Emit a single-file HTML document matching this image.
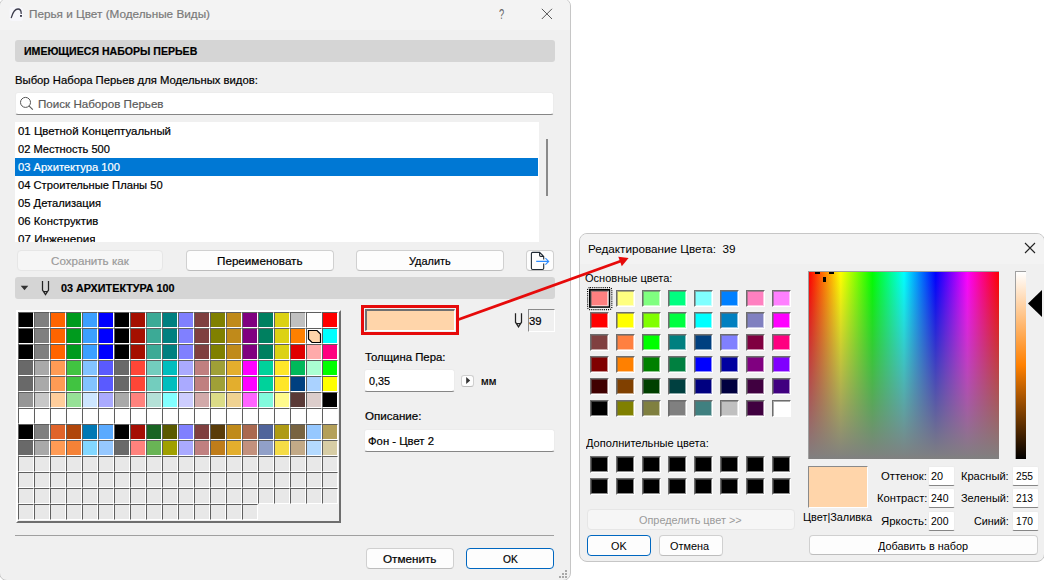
<!DOCTYPE html><html lang="ru"><head><meta charset="utf-8"><title>Перья и Цвет</title><style>
html,body{margin:0;padding:0;background:#fff;}
body{width:1044px;height:580px;position:relative;overflow:hidden;font-family:"Liberation Sans",sans-serif;}
.a{position:absolute;box-sizing:border-box;}
.t{position:absolute;white-space:pre;line-height:16px;height:16px;transform-origin:0 0;-webkit-text-stroke:0.2px;}
.dlg{position:absolute;box-sizing:border-box;background:#f0f0f0;border:1px solid #c6c6c6;overflow:hidden;}
.hdr{position:absolute;box-sizing:border-box;background:#d5d5d5;border-radius:3px;}
.btn{position:absolute;box-sizing:border-box;background:#fdfdfd;border:1px solid #d0d0d0;border-bottom-color:#bdbdbd;border-radius:4px;}
.btn.dis{background:#f6f6f6;border-color:#e6e6e6;}
.btn.def{border:1.5px solid #0067c0;}
.inp{position:absolute;box-sizing:border-box;background:#fff;border:1px solid #ececec;border-bottom:1px solid #868686;border-radius:3px;}
.grid{position:absolute;left:16px;top:310px;width:325px;height:213px;box-sizing:border-box;background:#f0f0f0;border-left:2px solid #fff;border-top:2px solid #fff;border-right:2px solid #6e6e6e;border-bottom:2px solid #6e6e6e;}
.grid i{position:absolute;margin:-2px 0 0 -2px;width:16px;height:16px;box-sizing:border-box;border-left:1px solid #5f5f5f;border-top:1px solid #5f5f5f;border-right:1px solid #fff;border-bottom:1px solid #fff;}
.sw{position:absolute;width:19px;height:17px;box-sizing:border-box;border-left:1px solid #6e6e6e;border-top:1px solid #6e6e6e;border-right:1px solid #fff;border-bottom:1px solid #fff;box-shadow:inset 1px 1px 0 rgba(105,105,105,.55),inset -1px -1px 0 rgba(255,255,255,.55);}
</style></head><body>
<div class="dlg" style="left:-1px;top:-2px;width:572px;height:583px;border-radius:8px;"><div class="a" style="left:0;top:0;width:572px;height:31px;background:#f3f3f3"></div></div>
<div class="hdr" style="left:15px;top:40px;width:540px;height:22px"></div>
<div class="inp" style="left:15px;top:92px;width:539px;height:23px"></div>
<div class="a" style="left:15px;top:122px;width:524px;height:120px;background:#fff"></div>
<div class="a" style="left:15px;top:158px;width:523px;height:18px;background:#0078d4"></div>
<div class="a" style="left:546px;top:139px;width:2px;height:57px;background:#8a8a8a"></div>
<div class="btn dis" style="left:17px;top:250px;width:146px;height:21px"></div>
<div class="btn" style="left:186px;top:250px;width:148px;height:21px"></div>
<div class="btn" style="left:356px;top:250px;width:148px;height:21px"></div>
<div class="btn" style="left:526px;top:250px;width:28px;height:21px"></div>
<div class="hdr" style="left:15px;top:277px;width:540px;height:22px"></div>
<div class="grid"><i style="left:2px;top:2px;background:#000000"></i><i style="left:18px;top:2px;background:#808080"></i><i style="left:34px;top:2px;background:#FF6400"></i><i style="left:50px;top:2px;background:#009B1E"></i><i style="left:66px;top:2px;background:#3CA0FF"></i><i style="left:82px;top:2px;background:#0000FF"></i><i style="left:98px;top:2px;background:#000000"></i><i style="left:114px;top:2px;background:#A50F00"></i><i style="left:130px;top:2px;background:#3CAA96"></i><i style="left:146px;top:2px;background:#008080"></i><i style="left:162px;top:2px;background:#8080FF"></i><i style="left:178px;top:2px;background:#804040"></i><i style="left:194px;top:2px;background:#808000"></i><i style="left:210px;top:2px;background:#C08A1A"></i><i style="left:226px;top:2px;background:#800080"></i><i style="left:242px;top:2px;background:#008060"></i><i style="left:258px;top:2px;background:#DCD214"></i><i style="left:274px;top:2px;background:#C0C0C0"></i><i style="left:290px;top:2px;background:#FFFFFF"></i><i style="left:306px;top:2px;background:#FF0000"></i><i style="left:2px;top:18px;background:#000000"></i><i style="left:18px;top:18px;background:#808080"></i><i style="left:34px;top:18px;background:#FF6400"></i><i style="left:50px;top:18px;background:#009B1E"></i><i style="left:66px;top:18px;background:#3CA0FF"></i><i style="left:82px;top:18px;background:#0000FF"></i><i style="left:98px;top:18px;background:#000000"></i><i style="left:114px;top:18px;background:#A50F00"></i><i style="left:130px;top:18px;background:#3CAA96"></i><i style="left:146px;top:18px;background:#008080"></i><i style="left:162px;top:18px;background:#8080FF"></i><i style="left:178px;top:18px;background:#804040"></i><i style="left:194px;top:18px;background:#808000"></i><i style="left:210px;top:18px;background:#C08A1A"></i><i style="left:226px;top:18px;background:#800080"></i><i style="left:242px;top:18px;background:#008060"></i><i style="left:258px;top:18px;background:#DCD214"></i><i style="left:274px;top:18px;background:#FF8000"></i><i style="left:290px;top:18px;background:#fff"></i><svg style="position:absolute;left:288px;top:16px" width="16" height="16"><polygon points="2.5,2.5 11,2.5 14.5,6 14.5,14.5 6,14.5 2.5,11" fill="#FFD5AA" stroke="#000" stroke-width="1.2"/></svg><i style="left:306px;top:18px;background:#00FFFF"></i><i style="left:2px;top:34px;background:#000000"></i><i style="left:18px;top:34px;background:#808080"></i><i style="left:34px;top:34px;background:#FF6400"></i><i style="left:50px;top:34px;background:#009B1E"></i><i style="left:66px;top:34px;background:#3CA0FF"></i><i style="left:82px;top:34px;background:#0000FF"></i><i style="left:98px;top:34px;background:#000000"></i><i style="left:114px;top:34px;background:#A50F00"></i><i style="left:130px;top:34px;background:#3CAA96"></i><i style="left:146px;top:34px;background:#008080"></i><i style="left:162px;top:34px;background:#8080FF"></i><i style="left:178px;top:34px;background:#804040"></i><i style="left:194px;top:34px;background:#808000"></i><i style="left:210px;top:34px;background:#C08A1A"></i><i style="left:226px;top:34px;background:#800080"></i><i style="left:242px;top:34px;background:#008060"></i><i style="left:258px;top:34px;background:#DCD214"></i><i style="left:274px;top:34px;background:#E00000"></i><i style="left:290px;top:34px;background:#FFAAAA"></i><i style="left:306px;top:34px;background:#FF0080"></i><i style="left:2px;top:50px;background:#696969"></i><i style="left:18px;top:50px;background:#A9A9A9"></i><i style="left:34px;top:50px;background:#FF9B55"></i><i style="left:50px;top:50px;background:#41C341"></i><i style="left:66px;top:50px;background:#82C3FF"></i><i style="left:82px;top:50px;background:#5A5AFF"></i><i style="left:98px;top:50px;background:#696969"></i><i style="left:114px;top:50px;background:#FF4637"></i><i style="left:130px;top:50px;background:#73CDBE"></i><i style="left:146px;top:50px;background:#00BEBE"></i><i style="left:162px;top:50px;background:#AAAAFF"></i><i style="left:178px;top:50px;background:#C08080"></i><i style="left:194px;top:50px;background:#A0A037"></i><i style="left:210px;top:50px;background:#E3AE2D"></i><i style="left:226px;top:50px;background:#FF00FF"></i><i style="left:242px;top:50px;background:#00D29B"></i><i style="left:258px;top:50px;background:#FFE628"></i><i style="left:274px;top:50px;background:#00B95A"></i><i style="left:290px;top:50px;background:#AAFFD2"></i><i style="left:306px;top:50px;background:#00FF00"></i><i style="left:2px;top:66px;background:#696969"></i><i style="left:18px;top:66px;background:#A9A9A9"></i><i style="left:34px;top:66px;background:#FF9B55"></i><i style="left:50px;top:66px;background:#41C341"></i><i style="left:66px;top:66px;background:#82C3FF"></i><i style="left:82px;top:66px;background:#5A5AFF"></i><i style="left:98px;top:66px;background:#696969"></i><i style="left:114px;top:66px;background:#FF4637"></i><i style="left:130px;top:66px;background:#73CDBE"></i><i style="left:146px;top:66px;background:#00BEBE"></i><i style="left:162px;top:66px;background:#AAAAFF"></i><i style="left:178px;top:66px;background:#C08080"></i><i style="left:194px;top:66px;background:#A0A037"></i><i style="left:210px;top:66px;background:#E3AE2D"></i><i style="left:226px;top:66px;background:#FF00FF"></i><i style="left:242px;top:66px;background:#00D29B"></i><i style="left:258px;top:66px;background:#FFE628"></i><i style="left:274px;top:66px;background:#004080"></i><i style="left:290px;top:66px;background:#AAD2FF"></i><i style="left:306px;top:66px;background:#FFFF00"></i><i style="left:2px;top:82px;background:#969696"></i><i style="left:18px;top:82px;background:#C8C8C8"></i><i style="left:34px;top:82px;background:#FFCD9B"></i><i style="left:50px;top:82px;background:#96E196"></i><i style="left:66px;top:82px;background:#CDE6FF"></i><i style="left:82px;top:82px;background:#AAAAFF"></i><i style="left:98px;top:82px;background:#AAAAAA"></i><i style="left:114px;top:82px;background:#FF827D"></i><i style="left:130px;top:82px;background:#B4E1D7"></i><i style="left:146px;top:82px;background:#82FFFF"></i><i style="left:162px;top:82px;background:#CDCDFF"></i><i style="left:178px;top:82px;background:#D2AAAA"></i><i style="left:194px;top:82px;background:#DCDC87"></i><i style="left:210px;top:82px;background:#F0D291"></i><i style="left:226px;top:82px;background:#FF64FF"></i><i style="left:242px;top:82px;background:#82FADC"></i><i style="left:258px;top:82px;background:#FFFA8C"></i><i style="left:274px;top:82px;background:#5A3A37"></i><i style="left:290px;top:82px;background:#DCCDCB"></i><i style="left:306px;top:82px;background:#000000"></i><i style="left:2px;top:98px;background:#FFFFFF"></i><i style="left:18px;top:98px;background:#FFFFFF"></i><i style="left:34px;top:98px;background:#FFFFFF"></i><i style="left:50px;top:98px;background:#FFFFFF"></i><i style="left:66px;top:98px;background:#FFFFFF"></i><i style="left:82px;top:98px;background:#FFFFFF"></i><i style="left:98px;top:98px;background:#FFFFFF"></i><i style="left:114px;top:98px;background:#FFFFFF"></i><i style="left:130px;top:98px;background:#FFFFFF"></i><i style="left:146px;top:98px;background:#FFFFFF"></i><i style="left:162px;top:98px;background:#FFFFFF"></i><i style="left:178px;top:98px;background:#FFFFFF"></i><i style="left:194px;top:98px;background:#FFFFFF"></i><i style="left:210px;top:98px;background:#FFFFFF"></i><i style="left:226px;top:98px;background:#FFFFFF"></i><i style="left:242px;top:98px;background:#FFFFFF"></i><i style="left:258px;top:98px;background:#FFFFFF"></i><i style="left:274px;top:98px;background:#FFFFFF"></i><i style="left:290px;top:98px;background:#FFFFFF"></i><i style="left:306px;top:98px;background:#FFFFFF"></i><i style="left:2px;top:114px;background:#000000"></i><i style="left:18px;top:114px;background:#808080"></i><i style="left:34px;top:114px;background:#E0642A"></i><i style="left:50px;top:114px;background:#B0460A"></i><i style="left:66px;top:114px;background:#0078B4"></i><i style="left:82px;top:114px;background:#5AAAFF"></i><i style="left:98px;top:114px;background:#000000"></i><i style="left:114px;top:114px;background:#A50F05"></i><i style="left:130px;top:114px;background:#196423"></i><i style="left:146px;top:114px;background:#5A5A00"></i><i style="left:162px;top:114px;background:#8080FF"></i><i style="left:178px;top:114px;background:#804040"></i><i style="left:194px;top:114px;background:#5A3C0A"></i><i style="left:210px;top:114px;background:#C08A1A"></i><i style="left:226px;top:114px;background:#AA6950"></i><i style="left:242px;top:114px;background:#50649B"></i><i style="left:258px;top:114px;background:#AF9B14"></i><i style="left:274px;top:114px;background:#786441"></i><i style="left:290px;top:114px;background:#96C8FF"></i><i style="left:306px;top:114px;background:#B4A05A"></i><i style="left:2px;top:130px;background:#696969"></i><i style="left:18px;top:130px;background:#A9A9A9"></i><i style="left:34px;top:130px;background:#FF9B55"></i><i style="left:50px;top:130px;background:#F58237"></i><i style="left:66px;top:130px;background:#82D7FF"></i><i style="left:82px;top:130px;background:#96C8FF"></i><i style="left:98px;top:130px;background:#696969"></i><i style="left:114px;top:130px;background:#FF827D"></i><i style="left:130px;top:130px;background:#69B455"></i><i style="left:146px;top:130px;background:#A0A000"></i><i style="left:162px;top:130px;background:#AAAAFF"></i><i style="left:178px;top:130px;background:#C08080"></i><i style="left:194px;top:130px;background:#C07D1A"></i><i style="left:210px;top:130px;background:#E3AE2D"></i><i style="left:226px;top:130px;background:#C3917D"></i><i style="left:242px;top:130px;background:#91A0C8"></i><i style="left:258px;top:130px;background:#F5DC46"></i><i style="left:274px;top:130px;background:#C3AA87"></i><i style="left:290px;top:130px;background:#B4DAFF"></i><i style="left:306px;top:130px;background:#D7CDA5"></i><i style="left:2px;top:146px;background:#E8E8E8"></i><i style="left:18px;top:146px;background:#E8E8E8"></i><i style="left:34px;top:146px;background:#E8E8E8"></i><i style="left:50px;top:146px;background:#E8E8E8"></i><i style="left:66px;top:146px;background:#E8E8E8"></i><i style="left:82px;top:146px;background:#E8E8E8"></i><i style="left:98px;top:146px;background:#E8E8E8"></i><i style="left:114px;top:146px;background:#E8E8E8"></i><i style="left:130px;top:146px;background:#E8E8E8"></i><i style="left:146px;top:146px;background:#E8E8E8"></i><i style="left:162px;top:146px;background:#E8E8E8"></i><i style="left:178px;top:146px;background:#E8E8E8"></i><i style="left:194px;top:146px;background:#E8E8E8"></i><i style="left:210px;top:146px;background:#E8E8E8"></i><i style="left:226px;top:146px;background:#E8E8E8"></i><i style="left:242px;top:146px;background:#E8E8E8"></i><i style="left:258px;top:146px;background:#E8E8E8"></i><i style="left:274px;top:146px;background:#E8E8E8"></i><i style="left:290px;top:146px;background:#E8E8E8"></i><i style="left:306px;top:146px;background:#E8E8E8"></i><i style="left:2px;top:162px;background:#E8E8E8"></i><i style="left:18px;top:162px;background:#E8E8E8"></i><i style="left:34px;top:162px;background:#E8E8E8"></i><i style="left:50px;top:162px;background:#E8E8E8"></i><i style="left:66px;top:162px;background:#E8E8E8"></i><i style="left:82px;top:162px;background:#E8E8E8"></i><i style="left:98px;top:162px;background:#E8E8E8"></i><i style="left:114px;top:162px;background:#E8E8E8"></i><i style="left:130px;top:162px;background:#E8E8E8"></i><i style="left:146px;top:162px;background:#E8E8E8"></i><i style="left:162px;top:162px;background:#E8E8E8"></i><i style="left:178px;top:162px;background:#E8E8E8"></i><i style="left:194px;top:162px;background:#E8E8E8"></i><i style="left:210px;top:162px;background:#E8E8E8"></i><i style="left:226px;top:162px;background:#E8E8E8"></i><i style="left:242px;top:162px;background:#E8E8E8"></i><i style="left:258px;top:162px;background:#E8E8E8"></i><i style="left:274px;top:162px;background:#E8E8E8"></i><i style="left:290px;top:162px;background:#E8E8E8"></i><i style="left:306px;top:162px;background:#E8E8E8"></i><i style="left:2px;top:178px;background:#E8E8E8"></i><i style="left:18px;top:178px;background:#E8E8E8"></i><i style="left:34px;top:178px;background:#E8E8E8"></i><i style="left:50px;top:178px;background:#E8E8E8"></i><i style="left:66px;top:178px;background:#E8E8E8"></i><i style="left:82px;top:178px;background:#E8E8E8"></i><i style="left:98px;top:178px;background:#E8E8E8"></i><i style="left:114px;top:178px;background:#E8E8E8"></i><i style="left:130px;top:178px;background:#E8E8E8"></i><i style="left:146px;top:178px;background:#E8E8E8"></i><i style="left:162px;top:178px;background:#E8E8E8"></i><i style="left:178px;top:178px;background:#E8E8E8"></i><i style="left:194px;top:178px;background:#E8E8E8"></i><i style="left:210px;top:178px;background:#E8E8E8"></i><i style="left:226px;top:178px;background:#E8E8E8"></i><i style="left:242px;top:178px;background:#E8E8E8"></i><i style="left:258px;top:178px;background:#E8E8E8"></i><i style="left:274px;top:178px;background:#E8E8E8"></i><i style="left:290px;top:178px;background:#E8E8E8"></i><i style="left:306px;top:178px;background:#E8E8E8"></i><i style="left:2px;top:194px;background:#E8E8E8"></i><i style="left:18px;top:194px;background:#E8E8E8"></i><i style="left:34px;top:194px;background:#E8E8E8"></i><i style="left:50px;top:194px;background:#E8E8E8"></i><i style="left:66px;top:194px;background:#E8E8E8"></i><i style="left:82px;top:194px;background:#E8E8E8"></i><i style="left:98px;top:194px;background:#E8E8E8"></i><i style="left:114px;top:194px;background:#E8E8E8"></i><i style="left:130px;top:194px;background:#E8E8E8"></i><i style="left:146px;top:194px;background:#E8E8E8"></i><i style="left:162px;top:194px;background:#E8E8E8"></i><i style="left:178px;top:194px;background:#E8E8E8"></i><i style="left:194px;top:194px;background:#E8E8E8"></i><i style="left:210px;top:194px;background:#E8E8E8"></i><i style="left:226px;top:194px;background:#E8E8E8"></i></div>
<div class="a" style="left:361px;top:305px;width:98px;height:30px;border:3px solid #e60a0a;"></div>
<div class="a" style="left:365px;top:309px;width:90px;height:22px;background:#ffd5aa;border-left:2px solid #707070;border-top:2px solid #707070;border-right:1px solid #fff;border-bottom:1px solid #fff"></div>
<div class="a" style="left:528px;top:309px;width:27px;height:23px;background:#f0f0f0;border-left:1px solid #8a8a8a;border-top:1px solid #8a8a8a;border-right:1px solid #fff;border-bottom:1px solid #fff"></div>
<div class="inp" style="left:364px;top:369px;width:91px;height:23px"></div>
<div class="btn" style="left:461px;top:375px;width:13px;height:12px;border-radius:3px"></div>
<div class="inp" style="left:364px;top:429px;width:191px;height:23px"></div>
<div class="a" style="left:15px;top:535px;width:539px;height:1px;background:#a0a0a0"></div>
<div class="btn" style="left:366px;top:548px;width:88px;height:21px"></div>
<div class="btn def" style="left:466px;top:548px;width:88px;height:21px"></div>
<div class="dlg" style="left:579px;top:233px;width:466px;height:329px;border-radius:8px;"><div class="a" style="left:0;top:0;width:466px;height:30px;background:#f3f3f3"></div></div>
<b class="sw" style="left:590px;top:290px;background:#FF8080"></b><b class="sw" style="left:616px;top:290px;background:#FFFF80"></b><b class="sw" style="left:642px;top:290px;background:#80FF80"></b><b class="sw" style="left:668px;top:290px;background:#00FF80"></b><b class="sw" style="left:694px;top:290px;background:#80FFFF"></b><b class="sw" style="left:720px;top:290px;background:#0080FF"></b><b class="sw" style="left:746px;top:290px;background:#FF80C0"></b><b class="sw" style="left:772px;top:290px;background:#FF80FF"></b><b class="sw" style="left:590px;top:312px;background:#FF0000"></b><b class="sw" style="left:616px;top:312px;background:#FFFF00"></b><b class="sw" style="left:642px;top:312px;background:#80FF00"></b><b class="sw" style="left:668px;top:312px;background:#00FF40"></b><b class="sw" style="left:694px;top:312px;background:#00FFFF"></b><b class="sw" style="left:720px;top:312px;background:#0080C0"></b><b class="sw" style="left:746px;top:312px;background:#8080C0"></b><b class="sw" style="left:772px;top:312px;background:#FF00FF"></b><b class="sw" style="left:590px;top:334px;background:#804040"></b><b class="sw" style="left:616px;top:334px;background:#FF8040"></b><b class="sw" style="left:642px;top:334px;background:#00FF00"></b><b class="sw" style="left:668px;top:334px;background:#008080"></b><b class="sw" style="left:694px;top:334px;background:#004080"></b><b class="sw" style="left:720px;top:334px;background:#8080FF"></b><b class="sw" style="left:746px;top:334px;background:#800040"></b><b class="sw" style="left:772px;top:334px;background:#FF0080"></b><b class="sw" style="left:590px;top:356px;background:#800000"></b><b class="sw" style="left:616px;top:356px;background:#FF8000"></b><b class="sw" style="left:642px;top:356px;background:#008000"></b><b class="sw" style="left:668px;top:356px;background:#008040"></b><b class="sw" style="left:694px;top:356px;background:#0000FF"></b><b class="sw" style="left:720px;top:356px;background:#0000A0"></b><b class="sw" style="left:746px;top:356px;background:#800080"></b><b class="sw" style="left:772px;top:356px;background:#8000FF"></b><b class="sw" style="left:590px;top:378px;background:#400000"></b><b class="sw" style="left:616px;top:378px;background:#804000"></b><b class="sw" style="left:642px;top:378px;background:#004000"></b><b class="sw" style="left:668px;top:378px;background:#004040"></b><b class="sw" style="left:694px;top:378px;background:#000080"></b><b class="sw" style="left:720px;top:378px;background:#000040"></b><b class="sw" style="left:746px;top:378px;background:#400040"></b><b class="sw" style="left:772px;top:378px;background:#400080"></b><b class="sw" style="left:590px;top:400px;background:#000000"></b><b class="sw" style="left:616px;top:400px;background:#808000"></b><b class="sw" style="left:642px;top:400px;background:#808040"></b><b class="sw" style="left:668px;top:400px;background:#808080"></b><b class="sw" style="left:694px;top:400px;background:#408080"></b><b class="sw" style="left:720px;top:400px;background:#C0C0C0"></b><b class="sw" style="left:746px;top:400px;background:#400040"></b><b class="sw" style="left:772px;top:400px;background:#FFFFFF"></b><b class="sw" style="left:590px;top:456px;background:#000"></b><b class="sw" style="left:616px;top:456px;background:#000"></b><b class="sw" style="left:642px;top:456px;background:#000"></b><b class="sw" style="left:668px;top:456px;background:#000"></b><b class="sw" style="left:694px;top:456px;background:#000"></b><b class="sw" style="left:720px;top:456px;background:#000"></b><b class="sw" style="left:746px;top:456px;background:#000"></b><b class="sw" style="left:772px;top:456px;background:#000"></b><b class="sw" style="left:590px;top:478px;background:#000"></b><b class="sw" style="left:616px;top:478px;background:#000"></b><b class="sw" style="left:642px;top:478px;background:#000"></b><b class="sw" style="left:668px;top:478px;background:#000"></b><b class="sw" style="left:694px;top:478px;background:#000"></b><b class="sw" style="left:720px;top:478px;background:#000"></b><b class="sw" style="left:746px;top:478px;background:#000"></b><b class="sw" style="left:772px;top:478px;background:#000"></b>
<div class="btn dis" style="left:587px;top:509px;width:208px;height:21px"></div>
<div class="btn def" style="left:587px;top:535px;width:64px;height:21px"></div>
<div class="btn" style="left:659px;top:535px;width:64px;height:21px"></div>
<div class="btn" style="left:809px;top:535px;width:229px;height:20px"></div>
<div class="a" style="left:808px;top:271px;width:191px;height:188px;border-left:1px solid #a0a0a0;border-top:1px solid #a0a0a0;background-origin:padding-box;background:linear-gradient(to bottom,rgba(128,128,128,0),#808080),linear-gradient(to right,#f00 0%,#ff0 16.67%,#0f0 33.33%,#0ff 50%,#00f 66.67%,#f0f 83.33%,#f00 100%)"></div>
<div class="a" style="left:1015px;top:271px;width:11px;height:188px;border-left:1px solid #a0a0a0;border-top:1px solid #a0a0a0;background:linear-gradient(to bottom,#fff 0%,#ff8000 50%,#000 100%)"></div>
<div class="a" style="left:808px;top:466px;width:60px;height:42px;background:#ffd5aa;border-left:1px solid #8a8a8a;border-top:1px solid #8a8a8a;border-right:1px solid #fff;border-bottom:1px solid #fff"></div>
<div class="inp" style="left:928px;top:466px;width:27px;height:20px;border-radius:2px"></div>
<div class="inp" style="left:1012px;top:466px;width:27px;height:20px;border-radius:2px"></div>
<div class="inp" style="left:928px;top:488px;width:27px;height:20px;border-radius:2px"></div>
<div class="inp" style="left:1012px;top:488px;width:27px;height:20px;border-radius:2px"></div>
<div class="inp" style="left:928px;top:511px;width:27px;height:20px;border-radius:2px"></div>
<div class="inp" style="left:1012px;top:511px;width:27px;height:20px;border-radius:2px"></div>
<svg class="a" style="left:0;top:0" width="1044" height="580" viewBox="0 0 1044 580">
<rect x="9.5" y="7" width="13.5" height="14" rx="2.5" fill="#f7f7fb"/><path d="M11.3 17.6C12.5 13.5 15 9 18 9C20.3 9 21.2 11 21.2 13.4" fill="none" stroke="#3c3c4c" stroke-width="1.3" stroke-linecap="round"/><rect x="20.1" y="15" width="1.8" height="1.8" fill="#2c2c3c"/><path d="M541.8 8.8L552 19M552 8.8L541.8 19" stroke="#555" stroke-width="1" fill="none"/><circle cx="25.5" cy="102.4" r="5" fill="none" stroke="#555" stroke-width="1"/><path d="M29.2 106.2L32.8 109.7" stroke="#555" stroke-width="1.1" fill="none"/><polygon points="20.7,285.8 28.3,285.8 24.5,290.2" fill="#333"/><path d="M42.5 281V290L45.5 294.6L48.5 290V281M43.8 291.5H47.2" fill="none" stroke="#222" stroke-width="1.25" stroke-linejoin="miter"/><path d="M515.5 313.2V322.2L518.5 326.8L521.5 322.2V313.2M516.8 323.7H520.2" fill="none" stroke="#222" stroke-width="1.25" stroke-linejoin="miter"/><path d="M543.7 259.5V256.4L539.6 252.4H532.6Q531.4 252.4 531.4 253.6V268.3Q531.4 269.5 532.6 269.5H542.5Q543.7 269.5 543.7 268.3V263.4M539.6 252.4V255.3Q539.6 256.4 540.7 256.4H543.7" fill="none" stroke="#1f2933" stroke-width="1.1"/><path d="M536.2 261.4H548.6M545.4 258.2L548.7 261.4L545.4 264.6" fill="none" stroke="#2d8cff" stroke-width="1.1"/><polygon points="466.2,376.9 466.2,384 470.2,380.4" fill="#333"/><path d="M1025 243L1035 253M1035 243L1025 253" stroke="#222" stroke-width="1.1" fill="none"/><rect x="565" y="570" width="2" height="2" fill="#a8a8a8"/><rect x="565" y="573" width="2" height="2" fill="#a8a8a8"/><rect x="565" y="576" width="2" height="2" fill="#a8a8a8"/><rect x="562" y="573" width="2" height="2" fill="#a8a8a8"/><rect x="562" y="576" width="2" height="2" fill="#a8a8a8"/><rect x="559" y="576" width="2" height="2" fill="#a8a8a8"/>
<rect x="589.75" y="289.75" width="19.7" height="17.3" fill="none" stroke="#000" stroke-width="1.5"/>
<rect x="587.6" y="287.6" width="24.2" height="22" rx="2.5" fill="none" stroke="#000" stroke-width="1.2" stroke-dasharray="1 1.1"/>
<rect x="815" y="272" width="5" height="2" fill="#000"/><rect x="829" y="272" width="5" height="2" fill="#000"/><rect x="823" y="277" width="3" height="5" fill="#000"/>
<line x1="458.5" y1="319.5" x2="621" y2="261" stroke="#e60a0a" stroke-width="2.8"/>
<polygon points="628.6,258.1 618.3,256.8 621.8,266.2" fill="#e60a0a"/>
<polygon points="1028,303.5 1042,290 1042,317" fill="#000"/>
</svg>
<span class="t" style="left:29.2px;top:6.4px;font-size:11.6px;transform:scaleX(1.0128);color:#7a7a7a;">Перья и Цвет (Модельные Виды)</span>
<span class="t" style="left:499.4px;top:6.0px;font-size:14px;transform:scaleX(0.6665);color:#666;-webkit-text-stroke:0;">?</span>
<span class="t" style="left:24.4px;top:42.8px;font-size:11.6px;transform:scaleX(0.9115);color:#000;font-weight:700;">ИМЕЮЩИЕСЯ НАБОРЫ ПЕРЬЕВ</span>
<span class="t" style="left:15.3px;top:71.7px;font-size:11.6px;transform:scaleX(0.9731);color:#000;">Выбор Набора Перьев для Модельных видов:</span>
<span class="t" style="left:38.3px;top:96.2px;font-size:11.6px;transform:scaleX(1.0009);color:#5a5a5a;">Поиск Наборов Перьев</span>
<span class="t" style="left:18.3px;top:123.0px;font-size:11.6px;transform:scaleX(0.9868);color:#000;">01 Цветной Концептуальный</span>
<span class="t" style="left:18.3px;top:141.0px;font-size:11.6px;transform:scaleX(0.9576);color:#000;">02 Местность 500</span>
<span class="t" style="left:18.3px;top:159.0px;font-size:11.6px;transform:scaleX(0.9632);color:#fff;">03 Архитектура 100</span>
<span class="t" style="left:18.3px;top:177.0px;font-size:11.6px;transform:scaleX(0.9640);color:#000;">04 Строительные Планы 50</span>
<span class="t" style="left:18.3px;top:195.0px;font-size:11.6px;transform:scaleX(0.9651);color:#000;">05 Детализация</span>
<span class="t" style="left:18.3px;top:213.0px;font-size:11.6px;transform:scaleX(0.9776);color:#000;">06 Конструктив</span>
<span class="t" style="left:18.3px;top:231.0px;font-size:11.6px;transform:scaleX(1.0045);color:#000;height:11px;overflow:hidden;">07 Инженерия</span>
<span class="t" style="left:51.4px;top:252.5px;font-size:11.6px;transform:scaleX(1.0010);color:#9a9a9a;">Сохранить как</span>
<span class="t" style="left:217.2px;top:252.5px;font-size:11.6px;transform:scaleX(1.0064);color:#000;">Переименовать</span>
<span class="t" style="left:409.4px;top:252.5px;font-size:11.6px;transform:scaleX(0.9413);color:#000;">Удалить</span>
<span class="t" style="left:60.5px;top:280.0px;font-size:11.6px;transform:scaleX(0.9316);color:#000;font-weight:700;">03 АРХИТЕКТУРА 100</span>
<span class="t" style="left:529.0px;top:313.4px;font-size:11.6px;transform:scaleX(0.9757);color:#000;">39</span>
<span class="t" style="left:365.0px;top:348.5px;font-size:11.6px;transform:scaleX(0.9797);color:#000;">Толщина Пера:</span>
<span class="t" style="left:368.7px;top:372.9px;font-size:11.6px;transform:scaleX(0.9344);color:#000;">0,35</span>
<span class="t" style="left:480.7px;top:373.0px;font-size:11.6px;transform:scaleX(0.9592);color:#000;">мм</span>
<span class="t" style="left:365.0px;top:408.0px;font-size:11.6px;transform:scaleX(0.9983);color:#000;">Описание:</span>
<span class="t" style="left:368.4px;top:432.7px;font-size:11.6px;transform:scaleX(0.9756);color:#000;">Фон - Цвет 2</span>
<span class="t" style="left:383.1px;top:551.0px;font-size:11.6px;transform:scaleX(1.0091);color:#000;">Отменить</span>
<span class="t" style="left:502.8px;top:551.0px;font-size:11.6px;transform:scaleX(0.8828);color:#000;">OK</span>
<span class="t" style="left:588.3px;top:241.0px;font-size:11.6px;transform:scaleX(1.0083);color:#000;-webkit-text-stroke:0;">Редактирование Цвета:  39</span>
<span class="t" style="left:585.3px;top:270.0px;font-size:11.6px;transform:scaleX(0.9514);color:#000;-webkit-text-stroke:0;">Основные цвета:</span>
<span class="t" style="left:585.5px;top:435.0px;font-size:11.6px;transform:scaleX(0.9545);color:#000;-webkit-text-stroke:0;">Дополнительные цвета:</span>
<span class="t" style="left:639.3px;top:512.0px;font-size:11.6px;transform:scaleX(0.9384);color:#9a9a9a;-webkit-text-stroke:0;">Определить цвет >></span>
<span class="t" style="left:610.6px;top:538.0px;font-size:11.6px;transform:scaleX(0.9305);color:#000;-webkit-text-stroke:0;">OK</span>
<span class="t" style="left:670.3px;top:538.0px;font-size:11.6px;transform:scaleX(0.9393);color:#000;-webkit-text-stroke:0;">Отмена</span>
<span class="t" style="left:802.8px;top:508.7px;font-size:11.6px;transform:scaleX(0.9394);color:#000;-webkit-text-stroke:0;">Цвет|Заливка</span>
<span class="t" style="left:881.3px;top:468.0px;font-size:11.6px;transform:scaleX(0.9740);color:#000;-webkit-text-stroke:0;">Оттенок:</span>
<span class="t" style="left:877.1px;top:490.4px;font-size:11.6px;transform:scaleX(0.9661);color:#000;-webkit-text-stroke:0;">Контраст:</span>
<span class="t" style="left:881.3px;top:513.0px;font-size:11.6px;transform:scaleX(0.9836);color:#000;-webkit-text-stroke:0;">Яркость:</span>
<span class="t" style="left:961.3px;top:468.0px;font-size:11.6px;transform:scaleX(0.9555);color:#000;-webkit-text-stroke:0;">Красный:</span>
<span class="t" style="left:961.3px;top:490.4px;font-size:11.6px;transform:scaleX(0.9458);color:#000;-webkit-text-stroke:0;">Зеленый:</span>
<span class="t" style="left:974.1px;top:513.0px;font-size:11.6px;transform:scaleX(0.9317);color:#000;-webkit-text-stroke:0;">Синий:</span>
<span class="t" style="left:930.9px;top:468.0px;font-size:11.6px;transform:scaleX(0.9370);color:#000;-webkit-text-stroke:0;">20</span>
<span class="t" style="left:930.9px;top:490.4px;font-size:11.6px;transform:scaleX(0.9038);color:#000;-webkit-text-stroke:0;">240</span>
<span class="t" style="left:930.9px;top:513.0px;font-size:11.6px;transform:scaleX(0.9038);color:#000;-webkit-text-stroke:0;">200</span>
<span class="t" style="left:1015.5px;top:468.0px;font-size:11.6px;transform:scaleX(0.8779);color:#000;-webkit-text-stroke:0;">255</span>
<span class="t" style="left:1015.5px;top:490.4px;font-size:11.6px;transform:scaleX(0.8779);color:#000;-webkit-text-stroke:0;">213</span>
<span class="t" style="left:1015.5px;top:513.0px;font-size:11.6px;transform:scaleX(0.8779);color:#000;-webkit-text-stroke:0;">170</span>
<span class="t" style="left:877.6px;top:538.0px;font-size:11.6px;transform:scaleX(0.9368);color:#000;-webkit-text-stroke:0;">Добавить в набор</span>
</body></html>
